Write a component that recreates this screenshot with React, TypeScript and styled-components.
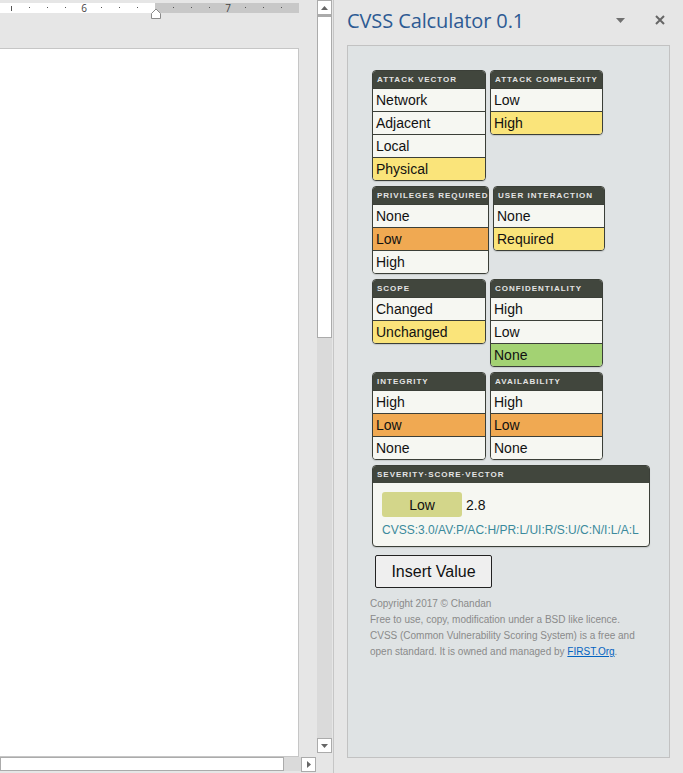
import React from "react";
import styled, { createGlobalStyle } from "styled-components";

const GlobalStyle = createGlobalStyle`
  html, body { margin: 0; padding: 0; }
  body { background: #e6e6e6; font-family: "Liberation Sans", Arial, sans-serif; }
`;

type Tone = "plain" | "yellow" | "orange" | "green";

const toneColor: Record<Tone, string> = {
  plain: "#f6f7f2",
  yellow: "#fae47a",
  orange: "#f0a952",
  green: "#a3d273",
};

const Shell = styled.div`
  display: flex;
  width: 683px;
  height: 773px;
  background: #e6e6e6;
  overflow: hidden;
`;

const EditorColumn = styled.div`
  width: 333px;
  display: flex;
  flex-direction: column;
`;

const EditorTop = styled.div`
  display: flex;
  height: 757px;
`;

const DocArea = styled.div`
  width: 317px;
  display: flex;
  flex-direction: column;
`;

const Ruler = styled.div`
  position: relative;
  margin-top: 3px;
  height: 10px;
  width: 299px;
  display: flex;
`;

const RulerWhite = styled.div`
  width: 155px;
  background: #ffffff;
`;

const RulerGrey = styled.div`
  flex: 1;
  background: #c8c8c8;
`;

const Tick = styled.span<{ $tall?: boolean }>`
  position: absolute;
  top: ${(p) => (p.$tall ? 3 : 4)}px;
  width: 1px;
  height: ${(p) => (p.$tall ? 5 : 1)}px;
  background: #555;
`;

const RulerNum = styled.span`
  position: absolute;
  top: -1px;
  font-family: "Open Sans", sans-serif;
  font-size: 10px;
  line-height: 12px;
  color: #444;
  transform: translateX(-50%);
`;

const IndentMarker = styled.svg`
  position: absolute;
  left: 151px;
  top: 3px;
`;

const Page = styled.div`
  margin-top: 35px;
  flex: 1;
  width: 298px;
  background: #ffffff;
  border-top: 1px solid #c6c6c6;
  border-right: 1px solid #c6c6c6;
  border-bottom: 1px solid #c6c6c6;
`;

const VScroll = styled.div`
  width: 15px;
  display: flex;
  flex-direction: column;
  padding-bottom: 4px;
`;

const ScrollButton = styled.div`
  box-sizing: border-box;
  width: 15px;
  height: 15px;
  flex: none;
  background: #ffffff;
  border: 1px solid #ababab;
  display: flex;
  align-items: center;
  justify-content: center;
`;

const VThumb = styled.div`
  box-sizing: border-box;
  height: 323px;
  background: #ffffff;
  border: 1px solid #ababab;
  border-top-width: 2px;
  flex: none;
`;

const Track = styled.div`
  flex: 1;
  background: #dadada;
`;

const HScroll = styled.div`
  display: flex;
  height: 14px;
  width: 316px;
`;

const HThumb = styled.div`
  box-sizing: border-box;
  width: 284px;
  background: #ffffff;
  border: 1px solid #ababab;
`;

const Separator = styled.div`
  width: 1px;
  background: #c6c6c6;
`;

const TaskPane = styled.div`
  flex: 1;
  display: flex;
  flex-direction: column;
  padding: 0 13px 15px 13px;
`;

const PaneHeader = styled.div`
  height: 45px;
  display: flex;
  align-items: center;
  padding-bottom: 1px;
  box-sizing: border-box;
`;

const PaneTitle = styled.div`
  flex: 1;
  font-family: "Open Sans", "Noto Sans", sans-serif;
  font-size: 20px;
  color: #2d5a93;
  letter-spacing: -0.1px;
  margin-top: -4px;
`;

const PaneIcons = styled.div`
  display: flex;
  align-items: center;
  gap: 30px;
  margin-right: 5px;
  margin-top: -4px;
`;

const Panel = styled.div`
  flex: 1;
  background: #dfe3e4;
  border: 1px solid #c2c2c2;
  padding: 24px 0 0 22px;
`;

const Grid = styled.div`
  display: flex;
  flex-direction: column;
  gap: 5px;
  margin-left: 2px;
`;

const CardRow = styled.div`
  display: flex;
  align-items: flex-start;
  gap: 4px;
`;

const Card = styled.div<{ $width: number }>`
  box-sizing: border-box;
  width: ${(p) => p.$width}px;
  border: 1px solid #3b3f38;
  border-radius: 4px;
  overflow: hidden;
  background: #f6f7f2;
  box-shadow: 0 1px 1px rgba(0, 0, 0, 0.12);
`;

const CardHeader = styled.div`
  height: 17px;
  line-height: 17px;
  padding: 0 4px;
  background: #41463d;
  color: #e4e4e4;
  font-family: "Liberation Sans", Arial, sans-serif;
  font-weight: bold;
  font-size: 8px;
  letter-spacing: 1px;
  white-space: nowrap;
`;

const Option = styled.div<{ $tone: Tone }>`
  height: 22px;
  line-height: 22px;
  border-top: 1px solid #3b3f38;
  padding: 0 3px;
  background: ${(p) => toneColor[p.$tone]};
  font-family: "Liberation Sans", Arial, sans-serif;
  font-size: 14px;
  color: #111;
  white-space: nowrap;
`;

const SeverityBody = styled.div`
  padding: 9px 9px 8px 9px;
  display: flex;
  flex-direction: column;
  gap: 5px;
`;

const ScoreLine = styled.div`
  display: flex;
  align-items: center;
  gap: 4px;
`;

const SeverityBadge = styled.div`
  width: 80px;
  height: 25px;
  border-radius: 3px;
  background: #d3d68a;
  display: flex;
  align-items: center;
  justify-content: center;
  font-size: 14px;
  color: #111;
`;

const ScoreValue = styled.span`
  font-size: 14px;
  color: #111;
`;

const VectorText = styled.div`
  font-size: 12px;
  color: #3b8a9c;
  line-height: 16px;
`;

const InsertButton = styled.button`
  margin: 8px 0 0 5px;
  width: 117px;
  height: 33px;
  border: 1px solid #222;
  border-radius: 2px;
  background: #efefef;
  font-family: "Liberation Sans", Arial, sans-serif;
  font-size: 16px;
  color: #111;
  padding: 0;
`;

const Footer = styled.div`
  margin-top: 8px;
  font-family: "Liberation Sans", Arial, sans-serif;
  font-size: 10px;
  line-height: 16px;
  color: #8a8a8a;
`;

const FooterLink = styled.a`
  color: #0563c1;
  text-decoration: underline;
`;

type Metric = {
  title: string;
  width: number;
  options: string[];
  selected: number;
  tone: Tone;
};

const rows: Metric[][] = [
  [
    { title: "ATTACK VECTOR", width: 114, options: ["Network", "Adjacent", "Local", "Physical"], selected: 3, tone: "yellow" },
    { title: "ATTACK COMPLEXITY", width: 113, options: ["Low", "High"], selected: 1, tone: "yellow" },
  ],
  [
    { title: "PRIVILEGES REQUIRED", width: 117, options: ["None", "Low", "High"], selected: 1, tone: "orange" },
    { title: "USER INTERACTION", width: 112, options: ["None", "Required"], selected: 1, tone: "yellow" },
  ],
  [
    { title: "SCOPE", width: 114, options: ["Changed", "Unchanged"], selected: 1, tone: "yellow" },
    { title: "CONFIDENTIALITY", width: 113, options: ["High", "Low", "None"], selected: 2, tone: "green" },
  ],
  [
    { title: "INTEGRITY", width: 114, options: ["High", "Low", "None"], selected: 1, tone: "orange" },
    { title: "AVAILABILITY", width: 113, options: ["High", "Low", "None"], selected: 1, tone: "orange" },
  ],
];

const ticks = [29, 47, 65, 101, 119, 137, 173, 191, 209, 245, 263, 281];

export default function App() {
  return (
    <>
      <GlobalStyle />
      <Shell>
        <EditorColumn>
          <EditorTop>
            <DocArea>
              <Ruler>
                <RulerWhite />
                <RulerGrey />
                <Tick $tall style={{ left: 11 }} />
                {ticks.map((x) => (
                  <Tick key={x} style={{ left: x }} />
                ))}
                <RulerNum style={{ left: 84 }}>6</RulerNum>
                <RulerNum style={{ left: 228 }}>7</RulerNum>
                <IndentMarker width="10" height="13" viewBox="0 0 10 13">
                  <path d="M0.5 12.5 V7.5 L5 3 L9.5 7.5 V12.5 Z" fill="#fff" stroke="#8a8a8a" strokeWidth="1" />
                </IndentMarker>
              </Ruler>
              <Page />
            </DocArea>
            <VScroll>
              <ScrollButton>
                <svg width="7" height="4" viewBox="0 0 7 4">
                  <path d="M0 4 L3.5 0 L7 4 Z" fill="#666" />
                </svg>
              </ScrollButton>
              <VThumb />
              <Track />
              <ScrollButton>
                <svg width="7" height="4" viewBox="0 0 7 4">
                  <path d="M0 0 L7 0 L3.5 4 Z" fill="#666" />
                </svg>
              </ScrollButton>
            </VScroll>
          </EditorTop>
          <HScroll>
            <HThumb />
            <Track />
            <ScrollButton>
              <svg width="4" height="7" viewBox="0 0 4 7">
                <path d="M0 0 L4 3.5 L0 7 Z" fill="#666" />
              </svg>
            </ScrollButton>
          </HScroll>
        </EditorColumn>
        <Separator />
        <TaskPane>
          <PaneHeader>
            <PaneTitle>CVSS Calculator 0.1</PaneTitle>
            <PaneIcons>
              <svg width="9" height="5" viewBox="0 0 9 5">
                <path d="M0 0 H9 L4.5 5 Z" fill="#707070" />
              </svg>
              <svg width="10" height="10" viewBox="0 0 10 10">
                <path d="M1 1 L9 9 M9 1 L1 9" stroke="#666" strokeWidth="2" />
              </svg>
            </PaneIcons>
          </PaneHeader>
          <Panel>
            <Grid>
              {rows.map((row, i) => (
                <CardRow key={i}>
                  {row.map((m) => (
                    <Card key={m.title} $width={m.width}>
                      <CardHeader>{m.title}</CardHeader>
                      {m.options.map((o, j) => (
                        <Option key={o} $tone={j === m.selected ? m.tone : "plain"}>
                          {o}
                        </Option>
                      ))}
                    </Card>
                  ))}
                </CardRow>
              ))}
              <Card $width={278}>
                <CardHeader>SEVERITY·SCORE·VECTOR</CardHeader>
                <SeverityBody>
                  <ScoreLine>
                    <SeverityBadge>Low</SeverityBadge>
                    <ScoreValue>2.8</ScoreValue>
                  </ScoreLine>
                  <VectorText>CVSS:3.0/AV:P/AC:H/PR:L/UI:R/S:U/C:N/I:L/A:L</VectorText>
                </SeverityBody>
              </Card>
            </Grid>
            <InsertButton>Insert Value</InsertButton>
            <Footer>
              Copyright 2017 © Chandan
              <br />
              Free to use, copy, modification under a BSD like licence.
              <br />
              CVSS (Common Vulnerability Scoring System) is a free and
              <br />
              open standard. It is owned and managed by <FooterLink href="#">FIRST.Org</FooterLink>.
            </Footer>
          </Panel>
        </TaskPane>
      </Shell>
    </>
  );
}
